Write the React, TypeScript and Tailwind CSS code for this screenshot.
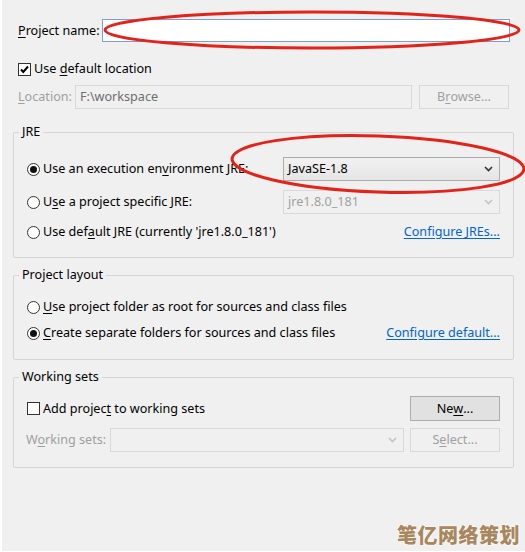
import { ReactNode } from "react";

const Mn = ({ children }: { children: ReactNode }) => <span className="underline underline-offset-2">{children}</span>

const Checkbox = ({ checked }: { checked?: boolean }) => (
    <span className="flex items-center justify-center w-[13px] h-[13px] border border-[#333] bg-white shrink-0">
        {checked && (
            <svg width="11" height="11" viewBox="0 0 11 11">
                <path d="M2 5.5 L4.3 8 L9 2.5" fill="none" stroke="#000" strokeWidth="2" />
            </svg>
        )}
    </span>
)

const Radio = ({ checked }: { checked?: boolean }) => (
    <span className="flex items-center justify-center w-[13px] h-[13px] rounded-full border border-[#333] bg-white shrink-0">
        {checked && <span className="w-[7px] h-[7px] rounded-full bg-[#111]" />}
    </span>
)

const Chevron = ({ disabled }: { disabled?: boolean }) => (
    <svg width="9" height="6" viewBox="0 0 9 6">
        <path d="M1 1 L4.5 4.5 L8 1" fill="none" stroke={disabled ? '#c4c4c4' : '#333'} strokeWidth="1.6" />
    </svg>
)

const Combo = ({ value, disabled, className }: { value: string, disabled?: boolean, className: string }) => (
    <div className={`${className} flex items-center justify-between pl-[4px] pr-[6px] border ${disabled ? 'border-[#d9d9d9] bg-[#f0f0f0] text-[#a0a0a0]' : 'border-[#acacac] bg-gradient-to-b from-[#f2f2f2] to-[#e5e5e5] text-black'}`}>
        <span>{value}</span>
        <Chevron disabled={disabled} />
    </div>
)

const Button = ({ children, disabled }: { children: ReactNode, disabled?: boolean }) => (
    <div className={`w-[90px] h-full flex items-center justify-center border ${disabled ? 'border-[#d9d9d9] bg-[#f0f0f0] text-[#a0a0a0]' : 'border-[#adadad] bg-[#e1e1e1] text-black'}`}>
        {children}
    </div>
)

const Group = ({ title, className, children }: { title: string, className: string, children: ReactNode }) => (
    <fieldset className={`mx-[11px] w-[501px] border border-[#d5d5d5] rounded-[2px] px-[13px] ${className}`}>
        <legend className="-ml-[8px] px-[3px] leading-[16px]">{title}</legend>
        {children}
    </fieldset>
)

const App = () => {
    return (
        <div className="relative w-[525px] h-[552px] bg-[#f0f0f0] border-l-2 border-b border-white text-[12.6px] leading-[16px] text-black font-['Noto_Sans','Noto_Sans_CJK_SC',sans-serif] overflow-hidden">
            <div className="flex items-center h-[23px] mt-[19px] pl-[16px]">
                <span className="w-[84px]"><Mn>P</Mn>roject name:</span>
                <div className="w-[408px] h-full bg-white border border-[#7a9fd0]" />
            </div>

            <div className="flex items-center gap-[3px] h-[16px] mt-[19px] pl-[16px]">
                <Checkbox checked />
                <span>Use <Mn>d</Mn>efault location</span>
            </div>

            <div className="flex items-center h-[24px] mt-[8px] pl-[16px] text-[#a0a0a0]">
                <span className="w-[57px]"><Mn>L</Mn>ocation:</span>
                <div className="w-[337px] h-full flex items-center pl-[4px] border border-[#d9d9d9] text-[#6d6d6d]">F:\workspace</div>
                <div className="ml-[7px] h-full"><Button disabled>B<Mn>r</Mn>owse...</Button></div>
            </div>

            <Group title="JRE" className="mt-[15px] pt-[17px] pb-[13px]">
                <div className="flex items-center justify-between h-[24px]">
                    <div className="flex items-center gap-[3px]"><Radio checked /><span>Use an execution en<Mn>v</Mn>ironment JRE:</span></div>
                    <Combo value="JavaSE-1.8" className="w-[217px] h-full" />
                </div>
                <div className="flex items-center justify-between h-[24px] mt-[9px]">
                    <div className="flex items-center gap-[3px]"><Radio /><span>U<Mn>s</Mn>e a project specific JRE:</span></div>
                    <Combo value="jre1.8.0_181" disabled className="w-[217px] h-full" />
                </div>
                <div className="flex items-center justify-between h-[24px] mt-[6px]">
                    <div className="flex items-center gap-[3px]"><Radio /><span>Use def<Mn>a</Mn>ult JRE (currently 'jre1.8.0_181')</span></div>
                    <span className="text-[#0066cc] underline underline-offset-2">Configure JREs...</span>
                </div>
            </Group>

            <Group title="Project layout" className="mt-[9px] pt-[12px] pb-[14px]">
                <div className="flex items-center h-[24px] gap-[3px]">
                    <Radio /><span><Mn>U</Mn>se project folder as root for sources and class files</span>
                </div>
                <div className="flex items-center justify-between h-[24px] mt-[2px]">
                    <div className="flex items-center gap-[3px]"><Radio checked /><span><Mn>C</Mn>reate separate folders for sources and class files</span></div>
                    <span className="text-[#0066cc] underline underline-offset-2">Configure default...</span>
                </div>
            </Group>

            <Group title="Working sets" className="mt-[9px] pt-[11px] pb-[15px]">
                <div className="flex items-center justify-between h-[25px]">
                    <div className="flex items-center gap-[3px]"><Checkbox /><span>Add projec<Mn>t</Mn> to working sets</span></div>
                    <Button>Ne<Mn>w</Mn>...</Button>
                </div>
                <div className="flex items-center h-[24px] mt-[7px]">
                    <span className="w-[84px] -ml-[1px] text-[#a0a0a0]">W<Mn>o</Mn>rking sets:</span>
                    <Combo value="" disabled className="w-[294px] h-full" />
                    <div className="ml-[6px] h-full"><Button disabled>S<Mn>e</Mn>lect...</Button></div>
                </div>
            </Group>

            <div className="absolute right-[5px] bottom-[4px] text-[20px] leading-[24px] font-black tracking-[0.5px] text-[#a8875e] font-['Noto_Sans_CJK_SC',sans-serif] [text-shadow:0_0_2px_#fff,0_0_2px_#fff]">
                笔亿网络策划
            </div>

            <svg className="absolute inset-0 pointer-events-none" width="525" height="552" viewBox="0 0 525 552">
                <ellipse cx="310" cy="30" rx="207" ry="18" fill="none" stroke="#e2231a" strokeWidth="3" />
                <ellipse cx="376" cy="164" rx="146" ry="28" fill="none" stroke="#e2231a" strokeWidth="3" transform="rotate(2 376 164)" />
            </svg>
        </div>
    );
}

export default App;
